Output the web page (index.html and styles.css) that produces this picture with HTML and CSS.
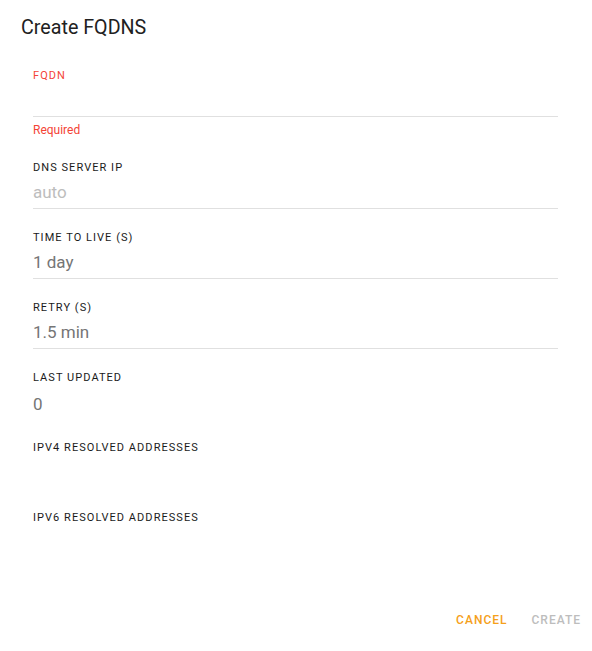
FILE: index.html
```html
<!DOCTYPE html>
<html>
    <head>
        <meta charset="utf-8">
        <title>Create FQDNS</title>
        <meta name="viewport" content="width=device-width, initial-scale=1">
        <link rel="stylesheet" href="styles.css">
    </head>
    <body>
        <div class="dialog">
            <h2 class="title">Create FQDNS</h2>

            <form class="form">
                <div class="field invalid">
                    <label for="fqdn">FQDN</label>
                    <input id="fqdn" name="fqdn" type="text">
                    <div class="helper">Required</div>
                </div>

                <div class="field">
                    <label for="dns">DNS Server IP</label>
                    <input id="dns" name="dns" type="text" placeholder="auto">
                </div>

                <div class="field">
                    <label for="ttl">Time to live (s)</label>
                    <input id="ttl" name="ttl" type="text" value="1 day">
                </div>

                <div class="field">
                    <label for="retry">Retry (s)</label>
                    <input id="retry" name="retry" type="text" value="1.5 min">
                </div>

                <div class="field static">
                    <label>Last updated</label>
                    <div class="value">0</div>
                </div>

                <div class="field static">
                    <label>IPv4 resolved addresses</label>
                    <div class="value"></div>
                </div>

                <div class="field static">
                    <label>IPv6 resolved addresses</label>
                    <div class="value"></div>
                </div>
            </form>

            <div class="actions">
                <button type="button" class="cancel">Cancel</button>
                <button type="button" class="create" disabled>Create</button>
            </div>
        </div>
    </body>
</html>
```

FILE: styles.css
```css
body{
    margin: 0;
    background-color: white;
    font-family: Roboto, "Liberation Sans", sans-serif;
    color: #212121;
}
.dialog{
    display: flex;
    flex-direction: column;
}
.title{
    margin: 0;
    padding: 14px 21px 0;
    font-size: 19.7px;
    font-weight: 400;
    line-height: 28px;
}
.form{
    display: flex;
    flex-direction: column;
    padding: 26px 34px 0 33px;
}
.field{
    display: flex;
    flex-direction: column;
    margin-bottom: 21px;
}
.field label{
    font-size: 11px;
    line-height: 16px;
    font-weight: 400;
    letter-spacing: 1.05px;
    text-transform: uppercase;
    color: #1a1a1a;
}
.field input{
    height: 32px;
    padding: 0;
    margin: 0;
    border: none;
    border-bottom: 1px solid #e0e0e0;
    outline: none;
    font-family: inherit;
    font-size: 17px;
    color: #757575;
    background: transparent;
}
.field input::placeholder{
    color: #bdbdbd;
}
.invalid label,
.helper{
    color: #f44336;
}
.helper{
    padding-top: 5px;
    font-size: 12px;
    line-height: 17px;
}
.static{
    margin-bottom: 20px;
}
.static .value{
    height: 32px;
    padding-top: 2px;
    font-size: 17px;
    line-height: 32px;
    color: #757575;
}
.actions{
    display: flex;
    justify-content: flex-end;
    gap: 8px;
    margin-top: 22px;
    padding: 0 3px;
}
.actions button{
    padding: 0 8px;
    height: 36px;
    border: none;
    background: none;
    font-family: inherit;
    font-size: 12px;
    font-weight: 500;
    letter-spacing: 1px;
    text-transform: uppercase;
    cursor: pointer;
}
.cancel{
    color: #f5a01a;
}
.create{
    color: #bdbdbd;
}
```
